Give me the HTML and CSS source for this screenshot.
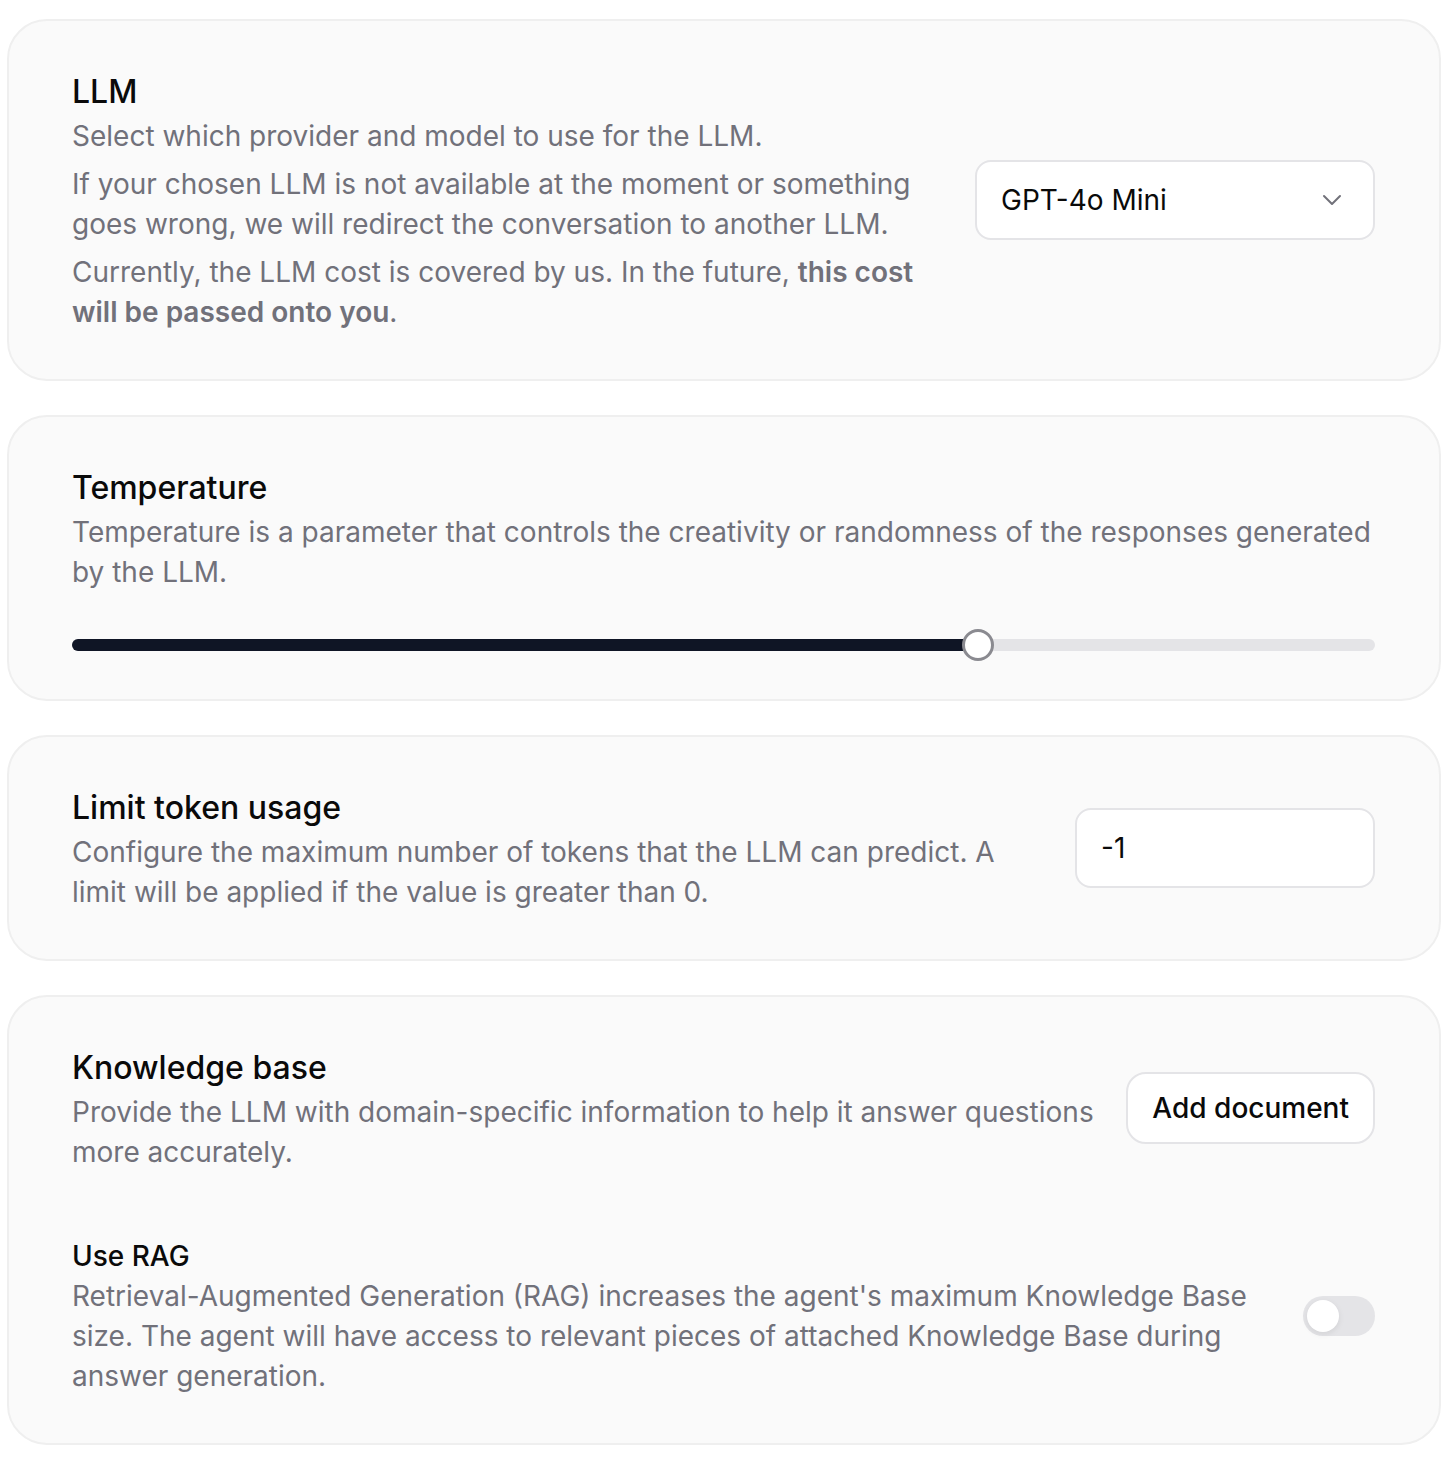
FILE: index.html
```html
<!DOCTYPE html>
<html lang="en">
<head>
<meta charset="utf-8">
<title>Agent settings</title>
<link rel="stylesheet" href="styles.css">
</head>
<body>
<main class="page">
  <section class="card">
    <div class="row">
      <div class="text">
        <h2 class="title">LLM</h2>
        <p class="desc">Select which provider and model to use for the LLM.</p>
        <p class="desc gap">If your chosen LLM is not available at the moment or something goes wrong, we will redirect the conversation to another LLM.</p>
        <p class="desc gap">Currently, the LLM cost is covered by us. In the future, <strong>this cost will be passed onto you</strong>.</p>
      </div>
      <div class="select">
        <span>GPT-4o Mini</span>
        <svg class="chev" width="22" height="22" viewBox="0 0 22 22" fill="none" stroke="#71717a" stroke-width="2" stroke-linecap="round" stroke-linejoin="round"><path d="M3 7l8 8 8-8"/></svg>
      </div>
    </div>
  </section>

  <section class="card card-slider">
    <h2 class="title">Temperature</h2>
    <p class="desc">Temperature is a parameter that controls the creativity or randomness of the responses generated by the LLM.</p>
    <div class="slider">
      <div class="track"><div class="fill" style="width:69.5%"></div></div>
      <div class="thumb" style="left:69.5%"></div>
    </div>
  </section>

  <section class="card">
    <div class="row">
      <div class="text">
        <h2 class="title">Limit token usage</h2>
        <p class="desc">Configure the maximum number of tokens that the LLM can predict. A limit will be applied if the value is greater than 0.</p>
      </div>
      <div class="input">-1</div>
    </div>
  </section>

  <section class="card">
    <div class="row">
      <div class="text">
        <h2 class="title">Knowledge base</h2>
        <p class="desc">Provide the LLM with domain-specific information to help it answer questions more accurately.</p>
      </div>
      <button class="btn">Add document</button>
    </div>
    <div class="row rag">
      <div class="text">
        <h3 class="subtitle">Use RAG</h3>
        <p class="desc">Retrieval-Augmented Generation (RAG) increases the agent's maximum Knowledge Base size. The agent will have access to relevant pieces of attached Knowledge Base during answer generation.</p>
      </div>
      <div class="toggle"><div class="knob"></div></div>
    </div>
  </section>
</main>
</body>
</html>
```
FILE: styles.css
```css
* { box-sizing: border-box; }
html, body { margin: 0; background: #ffffff; }
body {
  font-family: Inter, "Noto Sans", "Liberation Sans", sans-serif;
  color: #0a0a0a;
}
.page {
  padding: 19px 13px 17px 7px;
  display: flex;
  flex-direction: column;
  gap: 34px;
}
.card {
  background: #fafafa;
  border: 2px solid #efefef;
  border-radius: 40px;
  padding: 47px 64px 47px 63px;
}
.row {
  display: flex;
  align-items: center;
  gap: 32px;
}
.text { flex: 1; min-width: 0; }
.title {
  margin: 0;
  font-size: 32px;
  line-height: 48px;
  font-weight: 500;
  color: #0a0a0a;
}
.subtitle {
  margin: 0;
  font-size: 28px;
  line-height: 40px;
  font-weight: 500;
  color: #0a0a0a;
}
.desc {
  margin: 0;
  font-size: 28px;
  line-height: 40px;
  color: #71717a;
}
.desc.gap { margin-top: 8px; }
.desc strong { font-weight: 600; }

.select {
  width: 400px;
  height: 80px;
  flex: none;
  background: #fff;
  border: 2px solid #e4e4e7;
  border-radius: 16px;
  display: flex;
  align-items: center;
  justify-content: space-between;
  padding: 0 30px 0 24px;
  font-size: 28px;
  color: #0a0a0a;
}
.chev { display: block; }

.input {
  width: 300px;
  height: 80px;
  flex: none;
  background: #fff;
  border: 2px solid #e4e4e7;
  border-radius: 16px;
  display: flex;
  align-items: center;
  padding: 0 24px;
  font-size: 28px;
  color: #0a0a0a;
}

.btn {
  flex: none;
  height: 72px;
  background: #fff;
  border: 2px solid #e4e4e7;
  border-radius: 20px;
  padding: 0 24px;
  font-family: inherit;
  font-size: 28px;
  font-weight: 500;
  color: #0a0a0a;
}

.card-slider { padding-bottom: 38px; }
.slider {
  position: relative;
  margin-top: 37px;
  height: 32px;
  display: flex;
  align-items: center;
}
.track {
  width: 100%;
  height: 12px;
  border-radius: 6px;
  background: #e4e4e7;
  overflow: hidden;
}
.fill {
  height: 100%;
  background: #0f1525;
}
.thumb {
  position: absolute;
  top: 0;
  width: 32px;
  height: 32px;
  margin-left: -16px;
  border-radius: 50%;
  background: #fff;
  border: 3px solid #8a8a90;
}

.rag { margin-top: 64px; }
.toggle {
  flex: none;
  width: 72px;
  height: 40px;
  border-radius: 20px;
  background: #e4e4e7;
  padding: 4px;
  margin-left: 8px;
}
.knob {
  width: 32px;
  height: 32px;
  border-radius: 50%;
  background: #fff;
  box-shadow: 0 2px 6px rgba(0,0,0,0.08);
}
```
